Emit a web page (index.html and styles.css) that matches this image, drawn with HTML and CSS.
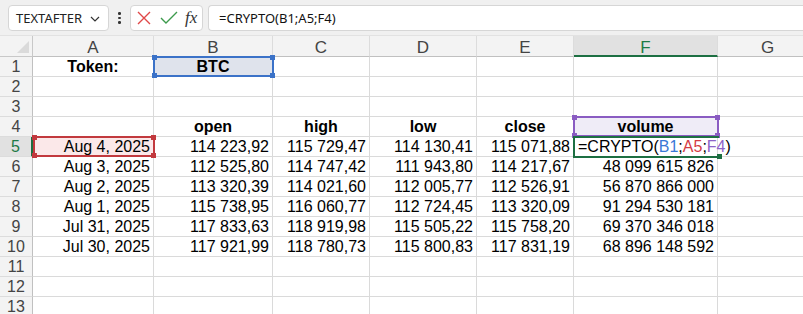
FILE: index.html
```html
<!DOCTYPE html>
<html>
<head>
<meta charset="utf-8">
<link rel="stylesheet" href="styles.css">
</head>
<body>
<div class="topbar">
  <div class="namebox">
    <span class="name">TEXTAFTER</span>
    <svg class="chev" width="10" height="6" viewBox="0 0 10 6"><path d="M1 1 L5 5 L9 1" fill="none" stroke="#333" stroke-width="1.2"/></svg>
  </div>
  <div class="dots"><i></i><i></i><i></i></div>
  <div class="iconbox">
    <svg width="16" height="16" viewBox="0 0 16 16"><path d="M2 2 L14 14 M14 2 L2 14" stroke="#e04848" stroke-width="1.4" fill="none"/></svg>
    <svg width="18" height="16" viewBox="0 0 18 16"><path d="M1 8 L6 13 L17 2" stroke="#3c9a4c" stroke-width="1.4" fill="none"/></svg>
    <span class="fx">fx</span>
  </div>
  <div class="formula">=CRYPTO(B1;A5;F4)</div>
</div>
<div class="sheet">
  <div class="grid">
    <div class="corner"><span class="tri"></span></div>
    <div class="ch">A</div><div class="ch">B</div><div class="ch">C</div><div class="ch">D</div><div class="ch">E</div><div class="ch sel">F</div><div class="ch">G</div>

    <div class="rh">1</div><div class="c b ctr">Token:</div><div class="c b ctr fb">BTC</div><div class="c"></div><div class="c"></div><div class="c"></div><div class="c"></div><div class="c"></div>
    <div class="rh">2</div><div class="c"></div><div class="c"></div><div class="c"></div><div class="c"></div><div class="c"></div><div class="c"></div><div class="c"></div>
    <div class="rh">3</div><div class="c"></div><div class="c"></div><div class="c"></div><div class="c"></div><div class="c"></div><div class="c"></div><div class="c"></div>
    <div class="rh">4</div><div class="c"></div><div class="c b ctr">open</div><div class="c b ctr">high</div><div class="c b ctr">low</div><div class="c b ctr">close</div><div class="c b ctr fp">volume</div><div class="c"></div>
    <div class="rh sel">5</div><div class="c r fr">Aug 4, 2025</div><div class="c r">114 223,92</div><div class="c r">115 729,47</div><div class="c r">114 130,41</div><div class="c r">115 071,88</div><div class="c edit">=CRYPTO(<span class="rb">B1</span>;<span class="rr">A5</span>;<span class="rp">F4</span>)</div><div class="c"></div>
    <div class="rh">6</div><div class="c r">Aug 3, 2025</div><div class="c r">112 525,80</div><div class="c r">114 747,42</div><div class="c r">111 943,80</div><div class="c r">114 217,67</div><div class="c r">48 099 615 826</div><div class="c"></div>
    <div class="rh">7</div><div class="c r">Aug 2, 2025</div><div class="c r">113 320,39</div><div class="c r">114 021,60</div><div class="c r">112 005,77</div><div class="c r">112 526,91</div><div class="c r">56 870 866 000</div><div class="c"></div>
    <div class="rh">8</div><div class="c r">Aug 1, 2025</div><div class="c r">115 738,95</div><div class="c r">116 060,77</div><div class="c r">112 724,45</div><div class="c r">113 320,09</div><div class="c r">91 294 530 181</div><div class="c"></div>
    <div class="rh">9</div><div class="c r">Jul 31, 2025</div><div class="c r">117 833,63</div><div class="c r">118 919,98</div><div class="c r">115 505,22</div><div class="c r">115 758,20</div><div class="c r">69 370 346 018</div><div class="c"></div>
    <div class="rh">10</div><div class="c r">Jul 30, 2025</div><div class="c r">117 921,99</div><div class="c r">118 780,73</div><div class="c r">115 800,83</div><div class="c r">117 831,19</div><div class="c r">68 896 148 592</div><div class="c"></div>
    <div class="rh">11</div><div class="c"></div><div class="c"></div><div class="c"></div><div class="c"></div><div class="c"></div><div class="c"></div><div class="c"></div>
    <div class="rh">12</div><div class="c"></div><div class="c"></div><div class="c"></div><div class="c"></div><div class="c"></div><div class="c"></div><div class="c"></div>
    <div class="rh">13</div><div class="c"></div><div class="c"></div><div class="c"></div><div class="c"></div><div class="c"></div><div class="c"></div><div class="c"></div>
  </div>
  <div class="ref blue"><i class="h tl"></i><i class="h tr"></i><i class="h bl"></i><i class="h br"></i></div>
  <div class="ref red"><i class="h tl"></i><i class="h tr"></i><i class="h bl"></i><i class="h br"></i></div>
  <div class="ref purple"><i class="h tl"></i><i class="h tr"></i><i class="h bl"></i><i class="h br"></i></div>
  <div class="active"><i class="h br"></i></div>
</div>
</body>
</html>
```
FILE: styles.css
```css
html, body { margin: 0; padding: 0; background: #ffffff; overflow: hidden; }
body { width: 803px; height: 314px; font-family: "Liberation Sans", Arial, sans-serif; }

.topbar {
  height: 36px;
  background: #f0f0f0;
  display: flex;
  align-items: flex-start;
  padding-top: 5px;
  box-sizing: border-box;
  border-bottom: 1px solid #e2e2e2;
}
.namebox {
  margin-left: 8px;
  width: 101px;
  height: 26px;
  box-sizing: border-box;
  background: #fff;
  border: 1px solid #d6d6d6;
  border-radius: 4px;
  display: flex;
  align-items: center;
  justify-content: space-between;
  padding: 0 8px 0 7px;
  font-family: "Noto Sans", "Open Sans", sans-serif;
  font-size: 13px;
  color: #222;
}
.chev { margin-top: 1px; }
.dots { width: 21px; height: 26px; display: flex; flex-direction: column; align-items: center; justify-content: center; gap: 2px; }
.dots i { width: 2.5px; height: 2.5px; background: #333; border-radius: 50%; display: block; }
.iconbox {
  width: 73px; height: 26px; box-sizing: border-box;
  background: #fff; border: 1px solid #d6d6d6; border-radius: 4px;
  display: flex; align-items: center; gap: 8px; padding-left: 5px;
}
.fx { font-family: "Liberation Serif", "DejaVu Serif", serif; font-style: italic; font-size: 17px; color: #333; margin-left: -1px; }
.formula {
  margin-left: 5px; flex: 1; height: 26px; box-sizing: border-box;
  background: #fff; border: 1px solid #d6d6d6; border-right: none; border-radius: 4px 0 0 4px;
  font-family: "Noto Sans", "Open Sans", sans-serif; font-size: 13px; color: #111;
  padding-left: 10px; line-height: 24px;
}

.sheet { position: relative; }
.grid {
  display: grid;
  grid-template-columns: 33px 121px 119px 97px 107px 97px 144px 100px;
  grid-template-rows: 21px repeat(13, 20px);
}
.corner { background: #f3f3f3; border-right: 1px solid #c8c8c8; border-bottom: 1px solid #c8c8c8; box-sizing: border-box; position: relative; }
.tri { position: absolute; right: 3px; bottom: 3px; width: 0; height: 0; border-left: 12px solid transparent; border-bottom: 12px solid #dadada; }
.ch {
  background: #f3f3f3; box-sizing: border-box;
  border-right: 1px solid #dcdcdc; border-bottom: 1px solid #c0c0c0;
  text-align: center; font-size: 17px; color: #444; line-height: 23px;
  font-family: "Liberation Sans", Arial, sans-serif;
}
.ch.sel { background: #e1e1e1; color: #1d7a46; border-bottom: 2px solid #1d6f42; }
.rh {
  background: #f3f3f3; box-sizing: border-box;
  border-right: 1px solid #c0c0c0; border-bottom: 1px solid #dcdcdc;
  text-align: center; font-size: 16px; color: #444; line-height: 20px;
  font-family: "Liberation Sans", Arial, sans-serif;
}
.rh.sel { background: #e1e1e1; color: #1d7a46; border-right: 2px solid #1d6f42; }
.c {
  box-sizing: border-box;
  border-right: 1px solid #dadada; border-bottom: 1px solid #dadada;
  font-size: 16px; line-height: 20px; color: #000; white-space: nowrap;
  padding: 0 3px; overflow: hidden;
}
.c.b { font-weight: bold; }
.c.ctr { text-align: center; }
.c.r { text-align: right; }
.c.fb { background: #dfe3ec; }
.c.fr { background: #fbe8e9; }
.c.fp { background: #efecf7; }
.c.edit { overflow: visible; position: relative; z-index: 2; padding-left: 4px; }
.rb { color: #3a78d6; }
.rr { color: #d43c44; }
.rp { color: #8d63c8; }

.ref { position: absolute; box-sizing: border-box; border: 2px solid; z-index: 1; }
.ref.blue { left: 153px; top: 20px; width: 121px; height: 21px; border-color: #3b72c8; }
.ref.red { left: 33px; top: 100px; width: 122px; height: 21px; border-color: #c2393e; }
.ref.purple { left: 573px; top: 80px; width: 146px; height: 21px; border-color: #8a5cc2; }
.ref.blue .h { background: #3b72c8; }
.ref.red .h { background: #c2393e; }
.ref.purple .h { background: #8a5cc2; }
.h { position: absolute; width: 5px; height: 5px; display: block; }
.h.tl { left: -3px; top: -3px; }
.h.tr { right: -3px; top: -3px; }
.h.bl { left: -3px; bottom: -3px; }
.h.br { right: -3px; bottom: -3px; }
.active { position: absolute; left: 573px; top: 100px; width: 146px; height: 22px; box-sizing: border-box; border: 2px solid #1d6f42; border-right: none; z-index: 3; }
.active .h { background: #1d6f42; right: -3px; bottom: -3px; }
```
